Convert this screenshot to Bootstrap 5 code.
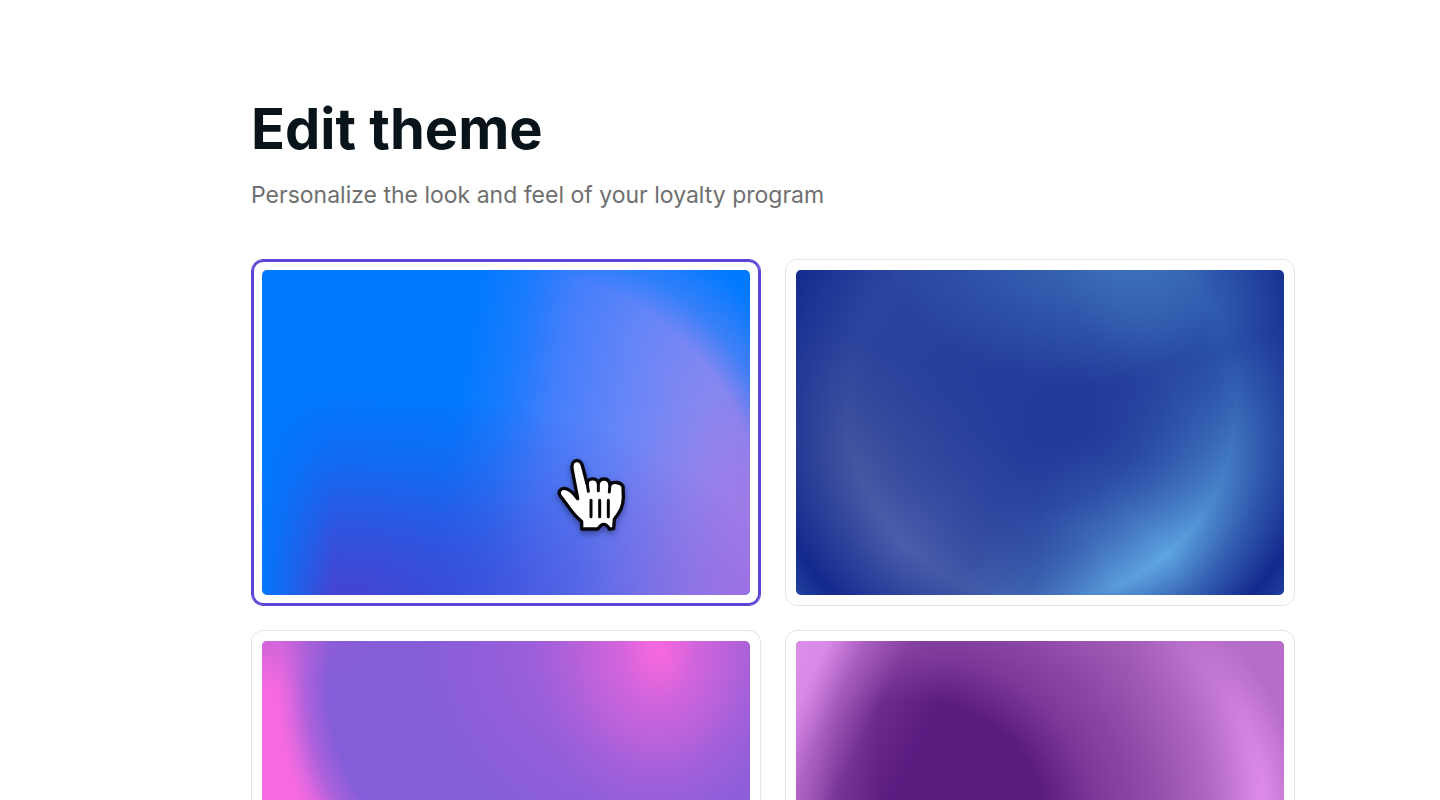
<!DOCTYPE html>
<html lang="en">
<head>
<meta charset="utf-8">
<meta name="viewport" content="width=device-width, initial-scale=1">
<title>Edit theme</title>
<link href="https://cdn.jsdelivr.net/npm/bootstrap@5.3.0/dist/css/bootstrap.min.css" rel="stylesheet">
<style>
  body { font-family: Inter, "Liberation Sans", sans-serif; color: #08131a; background: #fff; }
  .page { padding: 97px 0 24px; }
  @media (min-width: 1200px) { .page { padding-left: 251px; padding-right: 145px; } }
  .page-title { font-size: 56px; line-height: 64px; font-weight: 700; }
  .page-lead { font-size: 23px; line-height: 36px; color: #6f6f6f; }
  .theme-list { margin-top: 46px; }
  .theme-card { padding: 10px; border: 1px solid #e4e4e8; border-radius: 12px; cursor: pointer; }
  .theme-card:has(:checked) { border-color: #5b45d6; box-shadow: inset 0 0 0 2px #5b45d6; }
  .swatch { aspect-ratio: 3 / 2; border-radius: 5px; isolation: isolate; }
  .swatch::before, .swatch::after { content: ""; position: absolute; inset: 0; z-index: -1; border-radius: inherit; }
  .cursor-hand { left: 58%; top: 54%; width: 100px; height: 100px; filter: drop-shadow(0 3px 3px rgba(20, 20, 70, .5)); }

  /* Azure: lavender disc on the right, indigo glow at the bottom left */
  .swatch-azure { background: #007aff; }
  .swatch-azure::before {
    background: linear-gradient(100deg, rgba(0,122,255,0) 40%, rgba(44,124,252,.6) 49%, #457efb 58%, #6485f8 70%, #8a88ef 86%, #a080e8 100%);
    -webkit-mask-image: radial-gradient(circle at 252px 248px, #000 215px, rgba(0,0,0,.95) 245px, rgba(0,0,0,.45) 275px, transparent 322px);
    mask-image: radial-gradient(circle at 252px 248px, #000 215px, rgba(0,0,0,.95) 245px, rgba(0,0,0,.45) 275px, transparent 322px);
  }
  .swatch-azure::after {
    background:
      radial-gradient(ellipse 460px 215px at 70px 335px, rgba(72,64,206,1) 0, rgba(72,64,206,.68) 33%, rgba(72,64,206,.25) 68%, rgba(72,64,206,0) 100%),
      radial-gradient(ellipse 170px 200px at 488px 325px, rgba(172,112,226,.6), rgba(172,112,226,0));
    -webkit-mask-image: linear-gradient(90deg, rgba(0,0,0,.05), rgba(0,0,0,.5) 35px, #000 72px);
    mask-image: linear-gradient(90deg, rgba(0,0,0,.05), rgba(0,0,0,.5) 35px, #000 72px);
  }

  /* Navy: bright ring that changes hue round its centre */
  .swatch-navy { background: radial-gradient(circle at 246px 136px, #243d9b 0, #263f9c 150px, #13298d 282px, #2d55ac 335px); }
  .swatch-navy::before {
    background: conic-gradient(from 0deg at 246px 136px, #2b50a8 0deg, #2c54aa 58deg, #2a50a8 72deg, #3c70bc 98deg, #4a86cc 118deg, #5ea6e2 140deg, #5a9cda 158deg, #4068b4 182deg, #4258a6 205deg, #4c5dab 225deg, #44559f 255deg, #2c449c 290deg, #2b489f 330deg, #2b50a8 360deg);
    -webkit-mask-image: radial-gradient(circle at 246px 136px, transparent 40px, rgba(0,0,0,.22) 100px, rgba(0,0,0,.5) 146px, #000 194px, rgba(0,0,0,.45) 236px, transparent 282px);
    mask-image: radial-gradient(circle at 246px 136px, transparent 40px, rgba(0,0,0,.22) 100px, rgba(0,0,0,.5) 146px, #000 194px, rgba(0,0,0,.45) 236px, transparent 282px);
  }
  .swatch-navy::after {
    background:
      radial-gradient(ellipse 75px 100px at 345px -5px, rgba(70,130,198,.4), rgba(70,130,198,0)),
      radial-gradient(ellipse 210px 120px at 300px -5px, rgba(70,130,198,.55), rgba(70,130,198,0)),
      radial-gradient(ellipse 90px 90px at 295px 165px, rgba(31,55,150,.5), rgba(31,55,150,0));
  }

  /* Orchid: pink crescent on the left, pink glow at the top right */
  .swatch-orchid {
    background:
      radial-gradient(ellipse 120px 180px at 397px 10px, #f868de 0, rgba(240,104,222,.5) 30%, rgba(226,104,220,.16) 70%, rgba(220,104,220,0) 100%),
      radial-gradient(ellipse 235px 220px at 385px 0, rgba(216,100,220,.75), rgba(190,98,218,.35) 55%, rgba(160,96,218,0)),
      #845dd9;
  }
  .swatch-orchid::before {
    background: radial-gradient(ellipse 190px 250px at 200px 40px, rgba(245,106,224,0) 70%, rgba(245,106,224,.35) 82%, rgba(245,106,224,.8) 91%, #f56ae0 97%);
    -webkit-mask-image: linear-gradient(90deg, #000 100px, transparent 180px);
    mask-image: linear-gradient(90deg, #000 100px, transparent 180px);
  }
  .swatch-orchid::after { background: radial-gradient(ellipse 110px 60px at 20px -10px, rgba(160,94,210,.5), rgba(160,94,210,0)); }

  /* Plum: dark core with a light rim on the right */
  .swatch-plum { background: radial-gradient(ellipse 350px 330px at 118px 185px, #5b1c80 38%, #7c3899 52%, #9c56b2 76%, #b46cc8 100%); }
  .swatch-plum::before {
    background: radial-gradient(circle at 245px 180px, rgba(218,138,230,0) 120px, rgba(218,138,230,.4) 175px, #da8ae6 217px, #da8ae6 226px, rgba(184,108,202,.7) 262px);
    -webkit-mask-image: linear-gradient(105deg, transparent 58%, rgba(0,0,0,.45) 75%, #000 88%);
    mask-image: linear-gradient(105deg, transparent 58%, rgba(0,0,0,.45) 75%, #000 88%);
  }
  .swatch-plum::after {
    background:
      linear-gradient(116deg, #dc8eea 0, #d98ae7 5%, rgba(180,104,200,.75) 11%, rgba(140,70,166,.35) 18%, rgba(120,56,150,0) 27%),
      linear-gradient(90deg, rgba(196,120,214,.75), rgba(130,64,160,.45) 38px, rgba(91,28,128,0) 80px);
  }
</style>
</head>
<body>
<main class="page container-fluid">
  <h1 class="page-title mb-3" id="title">Edit theme</h1>
  <p class="page-lead mb-0">Personalize the look and feel of your loyalty program</p>

  <form class="theme-list row row-cols-1 row-cols-md-2 gx-4 gy-0" aria-labelledby="title">
    <div class="col mb-4">
      <label class="theme-card d-block">
        <input class="visually-hidden" type="radio" name="theme" value="azure" aria-label="Azure" checked>
        <span class="swatch swatch-azure d-block position-relative">
          <svg class="cursor-hand position-absolute" viewBox="0 0 300 300" aria-hidden="true">
            <path d="M98 158 L81 68 C78 37 108 36 113 62 L126 113 C128 94 157 94 160 112 C165 94 192 94 195 116 C203 105 227 108 234 121 L235 150 C236 180 226 196 208 220 L206 248 L193 249 C189 240 181 235 175 235 C168 235 164 242 158 249 L110 249 L110 227 C100 216 90 210 82 198 L50 155 C34 139 47 122 66 129 C79 134 89 146 98 158Z" fill="#fff" stroke="#05050c" stroke-width="10" stroke-linejoin="round"/>
            <path d="M126 108 L130 136 M160 108 L160 134 M195 112 L193 138 M138 163 V212 M164 163 V212 M190 163 V212" fill="none" stroke="#05050c" stroke-width="9" stroke-linecap="round"/>
          </svg>
        </span>
      </label>
    </div>
    <div class="col mb-4">
      <label class="theme-card d-block">
        <input class="visually-hidden" type="radio" name="theme" value="navy" aria-label="Navy">
        <span class="swatch swatch-navy d-block position-relative"></span>
      </label>
    </div>
    <div class="col mb-4">
      <label class="theme-card d-block">
        <input class="visually-hidden" type="radio" name="theme" value="orchid" aria-label="Orchid">
        <span class="swatch swatch-orchid d-block position-relative"></span>
      </label>
    </div>
    <div class="col mb-4">
      <label class="theme-card d-block">
        <input class="visually-hidden" type="radio" name="theme" value="plum" aria-label="Plum">
        <span class="swatch swatch-plum d-block position-relative"></span>
      </label>
    </div>
  </form>
</main>
<script src="https://cdn.jsdelivr.net/npm/bootstrap@5.3.0/dist/js/bootstrap.bundle.min.js"></script>
</body>
</html>
